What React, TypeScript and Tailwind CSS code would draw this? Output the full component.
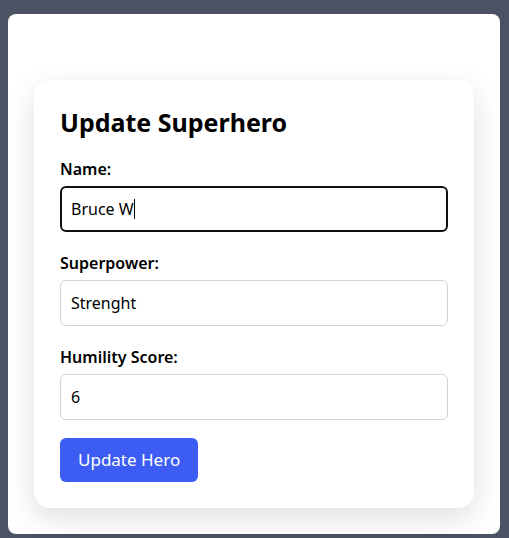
function Field({
  label,
  value,
  focused,
}: {
  label: string;
  value: string;
  focused?: boolean;
}) {
  return (
    <div className="flex flex-col">
      <label className="text-base font-semibold leading-6 text-black mb-[5px]">
        {label}
      </label>
      <div className="relative">
        <input
          defaultValue={value}
          className={
            focused
              ? "h-[46px] w-full rounded-md border-2 border-[#111] px-[9px] text-base text-black outline-none bg-white"
              : "h-[46px] w-full rounded-md border border-[#d4d4d8] px-[10px] text-base text-black outline-none bg-white"
          }
        />
        {focused && (
          <span className="absolute left-[74px] top-[13px] h-[20px] w-px bg-black" />
        )}
      </div>
    </div>
  );
}

export default function App() {
  return (
    <div
      className="h-[538px] overflow-hidden bg-[#4b5263] pt-[14px] px-[8px]"
      style={{ fontFamily: '"Noto Sans", "Open Sans", sans-serif' }}
    >
      <div className="w-[492px] h-[520px] bg-white rounded-lg pt-[66px] px-[26px]">
        <div className="w-[440px] bg-white rounded-2xl shadow-[0_10px_30px_rgba(0,0,0,0.13)] px-[26px] pt-[26px] pb-[26px]">
          <h2 className="text-[25px] font-bold leading-8 text-black mb-[19px]">
            Update Superhero
          </h2>
          <div className="flex flex-col gap-[19px]">
            <Field label="Name:" value="Bruce W" focused />
            <Field label="Superpower:" value="Strenght" />
            <Field label="Humility Score:" value="6" />
          </div>
          <button className="mt-[18px] h-[44px] rounded-md bg-[#3c5cf4] px-[18px] text-[17px] text-white">
            Update Hero
          </button>
        </div>
      </div>
    </div>
  );
}
